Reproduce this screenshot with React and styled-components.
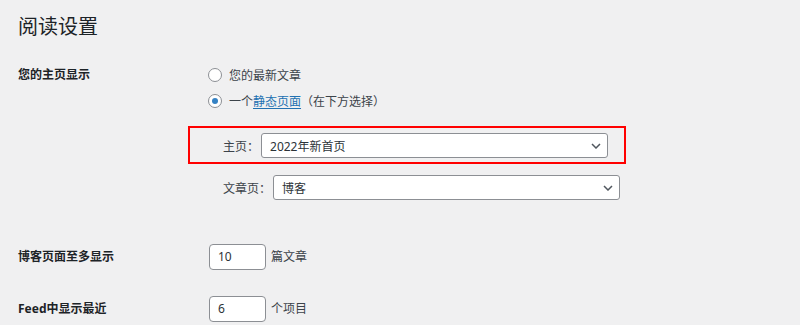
import React from "react";
import styled, { createGlobalStyle } from "styled-components";

const Global = createGlobalStyle`
  html, body { margin: 0; padding: 0; background: #f0f0f1; }
  body {
    font-family: "Noto Sans", "Noto Sans CJK SC", sans-serif;
    font-size: 12px;
    color: #3c434a;
  }
  * { box-sizing: border-box; }
`;

const Page = styled.div`
  padding: 14px 0 0 18px;
  width: 800px;
  height: 325px;
  overflow: hidden;
`;

const Title = styled.h1`
  margin: 0 0 9px;
  font-size: 20px;
  line-height: 26px;
  font-weight: 400;
  color: #1d2327;
`;

const Row = styled.div`
  display: grid;
  grid-template-columns: 190px 1fr;
  align-items: start;
  padding: 13px 0;
`;

const Label = styled.div`
  font-weight: 700;
  line-height: 26px;
  color: #1d2327;
`;

const Field = styled.div`
  display: flex;
  flex-direction: column;
`;

const RadioLine = styled.label`
  display: flex;
  align-items: center;
  height: 26px;
  color: #3c434a;
`;

const Radio = styled.span`
  width: 14px;
  height: 14px;
  border-radius: 50%;
  border: 1px solid #8c8f94;
  background: #fff;
  margin-right: 7px;
  display: flex;
  align-items: center;
  justify-content: center;
  &::after {
    content: "";
    width: 6px;
    height: 6px;
    border-radius: 50%;
    background: ${(p) => (p.$checked ? "#3582c4" : "transparent")};
  }
`;

const Link = styled.a`
  color: #2271b1;
  text-decoration: underline;
  text-underline-offset: 2px;
`;

const SubList = styled.ul`
  list-style: none;
  margin: 19px 0 18px;
  padding: 0 0 0 15px;
  display: flex;
  flex-direction: column;
  gap: 17px;
`;

const SubItem = styled.li`
  position: relative;
  display: flex;
  align-items: center;
  gap: 2px;
  width: max-content;
  color: #3c434a;
  &::after {
    content: "";
    display: ${(p) => (p.$highlight ? "block" : "none")};
    position: absolute;
    top: -7px;
    bottom: -6px;
    left: -35px;
    right: -18px;
    border: 2px solid #f00;
    pointer-events: none;
  }
`;

const Select = styled.div`
  width: 347px;
  height: 25px;
  border: 1px solid #8c8f94;
  border-radius: 3px;
  background: #fff;
  padding: 0 8px;
  display: flex;
  align-items: center;
  justify-content: space-between;
  color: #2c3338;
  box-shadow: 0 0 0 transparent;
`;

const Chevron = styled.svg`
  width: 10px;
  height: 6px;
  margin-right: -2px;
  margin-top: 1px;
`;

const Inline = styled.div`
  display: flex;
  align-items: center;
  gap: 5px;
  line-height: 26px;
  color: #3c434a;
`;

const NumInput = styled.div`
  width: 57px;
  height: 26px;
  border: 1px solid #8c8f94;
  border-radius: 4px;
  background: #fff;
  padding: 0 8px;
  display: flex;
  align-items: center;
  color: #2c3338;
  margin-left: 1px;
`;

function Dropdown({ value }) {
  return (
    <Select>
      <span>{value}</span>
      <Chevron viewBox="0 0 10 6">
        <path d="M1 1l4 4 4-4" fill="none" stroke="#50575e" strokeWidth="1.5" />
      </Chevron>
    </Select>
  );
}

export default function App() {
  return (
    <>
      <Global />
      <Page>
        <Title>阅读设置</Title>
        <Row>
          <Label>您的主页显示</Label>
          <Field>
            <RadioLine>
              <Radio />
              您的最新文章
            </RadioLine>
            <RadioLine>
              <Radio $checked />
              一个<Link>静态页面</Link>（在下方选择）
            </RadioLine>
            <SubList>
              <SubItem $highlight>
                主页：
                <Dropdown value="2022年新首页" />
              </SubItem>
              <SubItem>
                文章页：
                <Dropdown value="博客" />
              </SubItem>
            </SubList>
          </Field>
        </Row>
        <Row>
          <Label>博客页面至多显示</Label>
          <Inline>
            <NumInput>10</NumInput>
            篇文章
          </Inline>
        </Row>
        <Row>
          <Label>Feed中显示最近</Label>
          <Inline>
            <NumInput>6</NumInput>
            个项目
          </Inline>
        </Row>
      </Page>
    </>
  );
}
